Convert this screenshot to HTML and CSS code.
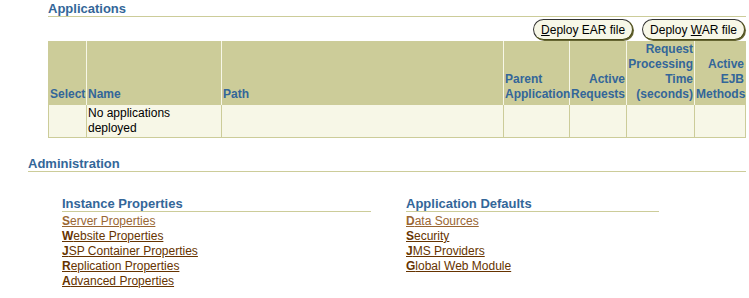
FILE: index.html
```html
<!DOCTYPE html>
<html>
<head>
    <meta charset="UTF-8">
    <title>Applications</title>
    <link rel="stylesheet" href="styles.css">
</head>
<body>
    <div class="apps">
        <h2 class="section-head">Applications</h2>
        <div class="actions">
            <button class="pill"><u>D</u>eploy EAR file</button>
            <button class="pill">Deploy <u>W</u>AR file</button>
        </div>
        <table class="grid">
            <colgroup>
                <col style="width: 38px">
                <col style="width: 135px">
                <col style="width: 282px">
                <col style="width: 66px">
                <col style="width: 57px">
                <col style="width: 68px">
                <col style="width: 51px">
            </colgroup>
            <thead>
                <tr>
                    <th>Select</th>
                    <th>Name</th>
                    <th>Path</th>
                    <th>Parent Application</th>
                    <th class="num">Active Requests</th>
                    <th class="num">Request Processing Time (seconds)</th>
                    <th class="num">Active EJB Methods</th>
                </tr>
            </thead>
            <tbody>
                <tr>
                    <td></td>
                    <td>No applications deployed</td>
                    <td></td>
                    <td></td>
                    <td></td>
                    <td></td>
                    <td></td>
                </tr>
            </tbody>
        </table>
    </div>

    <div class="admin">
        <h2 class="section-head">Administration</h2>
        <div class="admin-cols">
            <div class="admin-col left">
                <h3 class="sub-head">Instance Properties</h3>
                <a href="#" class="seen"><b>S</b>erver Properties</a>
                <a href="#"><b>W</b>ebsite Properties</a>
                <a href="#"><b>J</b>SP Container Properties</a>
                <a href="#"><b>R</b>eplication Properties</a>
                <a href="#"><b>A</b>dvanced Properties</a>
            </div>
            <div class="admin-col right">
                <h3 class="sub-head">Application Defaults</h3>
                <a href="#" class="seen"><b>D</b>ata Sources</a>
                <a href="#"><b>S</b>ecurity</a>
                <a href="#"><b>J</b>MS Providers</a>
                <a href="#"><b>G</b>lobal Web Module</a>
            </div>
        </div>
    </div>
</body>
</html>
```

FILE: styles.css
```css
body {
    margin: 0;
    font-family: "Liberation Sans", Arial, sans-serif;
    font-size: 12px;
    color: #000;
    background: #fff;
}
.section-head {
    margin: 0;
    font-size: 13px;
    font-weight: bold;
    line-height: 15px;
    color: #336699;
    border-bottom: 1px solid #cccc99;
}
.apps {
    padding: 1px 3px 0 48px;
}
.actions {
    display: flex;
    justify-content: flex-end;
    gap: 9px;
    padding-top: 2px;
    padding-right: 1px;
}
.pill {
    font-family: "Liberation Sans", Arial, sans-serif;
    font-size: 12px;
    height: 21px;
    padding: 0 7px;
    background: #f7f7e7;
    color: #000;
    border: 1px solid #333;
    border-right-color: #4a4a1a;
    border-bottom-color: #4a4a1a;
    box-shadow: 1px 1px 0 #666633;
    border-radius: 11px;
    cursor: pointer;
}
.grid {
    border-collapse: collapse;
    table-layout: fixed;
    width: 698px;
    margin-top: 1px;
}
.grid th {
    background: #cccc99;
    color: #336699;
    font-weight: bold;
    text-align: left;
    vertical-align: bottom;
    line-height: 15px;
    padding: 1px 1px 2px 1px;
    border-left: 1px solid #f7f7e7;
    height: 59px;
}
.grid th:first-child {
    border-left: 1px solid #cccc99;
}
.grid th:last-child {
    border-right: 1px solid #cccc99;
}
.grid th.num {
    text-align: right;
}
.grid td {
    background: #f7f7e7;
    border: 1px solid #cccc99;
    line-height: 15px;
    padding: 1px 1px;
    vertical-align: top;
}
.admin {
    padding: 18px 3px 0 28px;
}
.admin-cols {
    display: flex;
    padding-left: 34px;
    padding-top: 24px;
}
.admin-col {
    display: flex;
    flex-direction: column;
}
.admin-col.left {
    width: 309px;
    margin-right: 35px;
}
.admin-col.right {
    width: 253px;
}
.sub-head {
    margin: 0 0 2px 0;
    font-size: 13px;
    font-weight: bold;
    line-height: 15px;
    color: #336699;
    border-bottom: 1px solid #cccc99;
}
.admin-col a {
    color: #663300;
    line-height: 15px;
    align-self: flex-start;
}
.admin-col a.seen {
    color: #996633;
}
```
